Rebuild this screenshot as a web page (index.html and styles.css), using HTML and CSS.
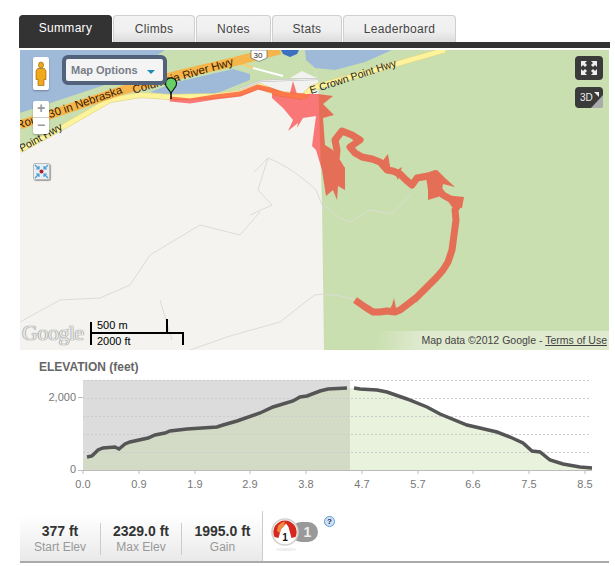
FILE: index.html
```html
<!DOCTYPE html>
<html lang="en">
<head>
  <meta charset="UTF-8">
  <title>Ride Summary</title>
  <link rel="stylesheet" href="styles.css">
</head>
<body>
  <div class="tabs">
    <div class="tab tab-active">Summary</div>
    <div class="tab tab-climbs">Climbs</div>
    <div class="tab tab-notes">Notes</div>
    <div class="tab tab-stats">Stats</div>
    <div class="tab tab-leader">Leaderboard</div>
  </div>
  <div class="tab-bar"></div>

  <div class="map">
    <svg class="map-art" viewBox="20 50 589 300" width="589" height="300">
      <rect x="20" y="50" width="589" height="300" fill="#f4f3f0"/>
      <!-- park -->
      <path d="M324 350L322 205L318 78L305 50H609V350Z" fill="#c9dfaf"/>
      <path d="M20 50H305L318 78L262 80L240 90L210 96L170 96L140 95L110 100L63 127L20 150Z" fill="#c9dfaf"/>
      <!-- water -->
      <path d="M20 50H165L120 80L20 113Z" fill="#9fb9d9"/>
      <path d="M150 92L177 82L233 69L250 74V80L225 90L213 95L170 95Z" fill="#9fb9d9"/>
      <path d="M305 50H392L365 62L335 70L315 68L306 60Z" fill="#9fb9d9"/>
      <path d="M240 91L262 81L318 79V88L302 96L270 90Z" fill="#f2f2f0"/>
      <path d="M290 78L302 71L317 78Z" fill="#f2f2f0"/>
      <!-- trails -->
      <g fill="none" stroke="#dcdcd6" stroke-width="1">
        <path d="M254 172L268 158L258 190L272 205L250 215"/>
        <path d="M268 158C285 165 300 175 316 190L324 210"/>
        <path d="M20 322L60 300L100 298L130 285L150 255L200 225L240 235L260 212"/>
        <path d="M160 300L172 340"/>
        <path d="M190 350L230 336L280 322L308 300L315 295L324 294"/>
        <path d="M324 205L340 218L350 222L370 210L392 214L410 195"/>
        <path d="M324 294L340 296L354 299"/>
      </g>
      <path d="M240 89L260 81L318 79" fill="none" stroke="#bbb" stroke-width="2"/>
      <path d="M240 89L260 81L318 79" fill="none" stroke="#eee" stroke-width="1"/>
      <!-- roads -->
      <path d="M20 150L63 127L110 100L140 95L170 97L215 96L240 93L260 86L277 93L303 97M303 97L312 88L445 50" fill="none" stroke="#e0d88c" stroke-width="6"/>
      <path d="M20 150L63 127L110 100L140 95L170 97L215 96L240 93L260 86L277 93L303 97M303 97L312 88L445 50" fill="none" stroke="#fdf39b" stroke-width="4.500"/>
      <path d="M240 63L253 68" fill="none" stroke="#f5d070" stroke-width="2"/>
      <path d="M253 68L283 76" fill="none" stroke="#fff" stroke-width="2"/>
      <path d="M20 125L123 90L177 75L233 62L280 50" fill="none" stroke="#f6b54a" stroke-width="9"/>
      <g class="road-label">
        <text transform="translate(123 93) rotate(-19)" text-anchor="end">Route 30 in Nebraska</text>
        <text transform="translate(234 65) rotate(-16)" text-anchor="end">Columbia River Hwy</text>
        <text transform="translate(311 94) rotate(-18)" class="road-small">E Crown Point Hwy</text>
        <text transform="translate(63 129) rotate(-29)" class="road-small" text-anchor="end">Point Hwy</text>
      </g>
      <path d="M251 50H267V58L259 61.500L251 58Z" fill="#fff" stroke="#555" stroke-width=".6"/>
      <text x="253.500" y="58" class="shield">30</text>
      <path d="M281 50H299L297 54L290 57L283 54Z" fill="#3d70c0"/>

      <!-- track -->
      <g class="track">
        <path d="M170 99L190 101L215 97L240 94L258 87L270 90L285 95L305 96" fill="none" stroke="#f00" stroke-width="5"/>
        <path d="M272 90L290 93L293 81L297 94L308 94L318 94L333 96L323 104L334 115L323 118L325 145L333 150L338 160L345 168L345 190L338 186L337 200L333 190L326 196L322 170L316 150L312 146L316 116L303 118L297 128L298 123L288 131L293 120L283 108L272 98Z" fill="#f00"/>
        <path d="M342 170L336 160L337 150L335 140L342 131L352 135L360 140L350 147L355 153L362 157L372 159L380 162L387 170L393 171L400 174L406 180L412 185L417 178L428 176L437 173M437 187L443 195L452 200L458 205L455 210L456 220L454 235L452 250L448 262L443 270L437 277L428 286L417 297L408 304L400 310L395 312L387 311L380 312L373 312L365 307L355 300" fill="none" stroke="#f00" stroke-width="7" stroke-linejoin="round"/>
        <path d="M426 177L437 170L445 178L455 187L443 184L441 196L428 200L428 190Z" fill="#f00"/>
        <path d="M380 164L388 154L391 172Z" fill="#f00"/>
        <path d="M394 172L402 167L398 180Z" fill="#f00"/>
        <path d="M444 195L464 197L462 208L452 207Z" fill="#f00"/>
        <path d="M392 305L394 298L397 313L388 312Z" fill="#f00"/>
        <path d="M415 296L420 290L417 303Z" fill="#f00"/>
        <path d="M352 138L364 139L356 146Z" fill="#f00"/>
      </g>
      <!-- start pin -->
      <path d="M171 99V91" stroke="#111" stroke-width="1.600"/>
      <path d="M171 93L166 86A5.600 5.600 0 1 1 176 86Z" fill="#66cf66" stroke="#111" stroke-width="1.200"/>
    </svg>

    <div class="pegman">
      <svg viewBox="0 0 16 33" width="16" height="33">
        <ellipse cx="8" cy="8" rx="2.500" ry="3" fill="#f1a91c" stroke="#8a5a00" stroke-width=".6"/>
        <path d="M4.500 11.500H11.500L13 14V22.500H11V28.500H5V22.500H3V14Z" fill="#f1a91c" stroke="#8a5a00" stroke-width=".6"/>
      </svg>
    </div>
    <div class="map-options">Map Options <span class="caret"></span></div>
    <div class="zoom-ctl">
      <div class="zoom-btn">+</div>
      <div class="zoom-btn">&minus;</div>
    </div>
    <div class="collapse-btn">
      <svg viewBox="0 0 17 17" width="17" height="17">
        <circle cx="8.500" cy="8.500" r="2" fill="#a8222c"/>
        <path d="M2 2L6 6M6 3V6H3M15 2L11 6M11 3V6H14M2 15L6 11M6 14V11H3M15 15L11 11M11 14V11H14" stroke="#4a9bd4" stroke-width="1.200" fill="none"/>
      </svg>
    </div>
    <div class="fullscreen-btn">
      <svg viewBox="0 0 28 24" width="28" height="24">
        <path d="M6 5H12L10 7L12 9L10 11L8 9L6 11ZM22 5H16L18 7L16 9L18 11L20 9L22 11ZM6 19H12L10 17L12 15L10 13L8 15L6 13ZM22 19H16L18 17L16 15L18 13L20 15L22 13Z" fill="#eee"/>
      </svg>
    </div>
    <div class="threed-btn">
      <span>3D</span>
      <svg class="threed-corner" viewBox="0 0 28 21" width="28" height="21">
        <path d="M28 8V19A2 2 0 0 1 26 21H16Z" fill="#aaa"/>
        <path d="M19 5H24V10Z" fill="#eee"/>
      </svg>
    </div>

    <div class="google-logo">Google</div>
    <div class="scale">
      <span class="scale-top">500 m</span>
      <span class="scale-bottom">2000 ft</span>
    </div>
    <div class="attribution">Map data &copy;2012 Google - <u>Terms of Use</u></div>
  </div>

  <h2 class="elev-title">ELEVATION (feet)</h2>
  <svg class="chart" viewBox="0 0 615 130" width="615" height="130">
    <g transform="translate(0 -370)">
      <rect x="83" y="380" width="267" height="90" fill="#dcdcdc"/>
      <path d="M83 459L87 457L92 456L98 450L103 448L115 447L119 449L125 444L130 442L148 438L155 435L165 433L170 431L187 429L217 427L223 425L237 421L260 413L273 407L293 401L300 397L307 396L320 391L328 389L345 389L350 388V470H83Z" fill="#d3dbc6"/>
      <path d="M350 388L360 389L377 390L387 392L407 399L427 407L440 414L467 425L497 432L510 437L523 443L532 451L540 452L550 460L563 464L580 467L592 468V470H350Z" fill="#e9f2dd"/>
      <g stroke="#ccc" stroke-width="1" stroke-dasharray="2 2" fill="none">
        <path d="M83 380.500H590"/>
        <path d="M83 398.500H590"/>
        <path d="M83 416.500H590"/>
        <path d="M83 434.500H590"/>
        <path d="M83 452.500H590"/>
      </g>
      <path d="M78 470.500H592M78 397.500H83M83 470V474M139 470V474M195 470V474M250 470V474M306 470V474M362 470V474M418 470V474M473 470V474M529 470V474M585 470V474" stroke="#bbb" stroke-width="1" fill="none"/>
      <path d="M87 457L92 456L98 450L103 448L115 447L119 449L125 444L130 442L148 438L155 435L165 433L170 431L187 429L217 427L223 425L237 421L260 413L273 407L293 401L300 397L307 396L320 391L328 389L347 388" fill="none" stroke="#555" stroke-width="3.500"/>
      <path d="M354 388L360 389L377 390L387 392L407 399L427 407L440 414L467 425L497 432L510 437L523 443L532 451L540 452L550 460L563 464L580 467L592 468" fill="none" stroke="#555" stroke-width="3.500"/>
      <g class="axis-label">
        <text x="76" y="401" text-anchor="end">2,000</text>
        <text x="76" y="473" text-anchor="end">0</text>
        <text x="83" y="488" text-anchor="middle">0.0</text>
        <text x="139" y="488" text-anchor="middle">0.9</text>
        <text x="195" y="488" text-anchor="middle">1.9</text>
        <text x="250" y="488" text-anchor="middle">2.9</text>
        <text x="306" y="488" text-anchor="middle">3.8</text>
        <text x="362" y="488" text-anchor="middle">4.7</text>
        <text x="418" y="488" text-anchor="middle">5.7</text>
        <text x="473" y="488" text-anchor="middle">6.6</text>
        <text x="529" y="488" text-anchor="middle">7.5</text>
        <text x="585" y="488" text-anchor="middle">8.5</text>
      </g>
    </g>
  </svg>

  <div class="stats-row">
    <div class="stats">
      <div class="stat"><b>377 ft</b><span>Start Elev</span></div>
      <div class="stat"><b>2329.0 ft</b><span>Max Elev</span></div>
      <div class="stat"><b>1995.0 ft</b><span>Gain</span></div>
    </div>
    <div class="badges">
      <div class="badge-shadow"></div>
      <div class="badge-count">1</div>
      <svg class="badge-icon" viewBox="0 0 28 28" width="28" height="28">
        <circle cx="14" cy="14" r="13" fill="#fff" stroke="#d4d0cc" stroke-width="1.600"/>
        <path d="M3.500 19A11.500 11.500 0 0 1 14 2.500A11.500 11.500 0 0 1 24.500 19L20.500 20L17.500 9L15 5.500L13 8L10 11L7.500 20Z" fill="#d5281f"/>
        <path d="M7 8Q10 4 14 3.500L13 8L10 11L8.500 15L6 13Z" fill="#f08a3c"/>
        <text x="14" y="23" class="badge-num">1</text>
      </svg>
      <div class="help">?</div>
    </div>
  </div>
</body>
</html>
```

FILE: styles.css
```css
body {
  font-family: "Liberation Sans", Arial, sans-serif;
  background-color: #ffffff;
  margin: 0;
  padding: 0;
  width: 615px;
  height: 566px;
  overflow: hidden;
}

.tabs {
  display: flex;
  gap: 1px;
  padding: 15px 0 0 19px;
  height: 27px;
}

.tab {
  box-sizing: border-box;
  height: 27px;
  line-height: 27px;
  text-align: center;
  font-size: 12px;
  letter-spacing: 0.3px;
  color: #444;
  background: linear-gradient(#f2f2f2, #f0f0f0 55%, #dcdcdc);
  border: 1px solid #cfcfcf;
  border-bottom: none;
  border-radius: 4px 4px 0 0;
}

.tab-active {
  width: 93px;
  color: #ffffff;
  background: #333333;
  border-color: #333333;
  line-height: 24px;
}

.tab-climbs { width: 82px; }
.tab-notes { width: 75px; }
.tab-stats { width: 70px; }
.tab-leader { width: 113px; }

.tab-bar {
  margin-left: 19px;
  width: 591px;
  height: 6px;
  background-color: #333333;
}

.map {
  position: relative;
  width: 589px;
  height: 300px;
  margin: 2px 0 0 20px;
  overflow: hidden;
}

.map-art {
  display: block;
}

.track {
  opacity: 0.5;
}

.road-label text {
  font-size: 11.5px;
  fill: #3a2000;
}

.road-label .road-small {
  font-size: 10.5px;
  fill: #222;
}

.shield {
  font-size: 8px;
  fill: #222;
}

.pegman {
  position: absolute;
  left: 13px;
  top: 7px;
  width: 16px;
  height: 33px;
  background-color: #fff;
  border-radius: 2px;
  box-shadow: 0 1px 2px rgba(0, 0, 0, 0.3);
}

.map-options {
  position: absolute;
  left: 42px;
  top: 5px;
  box-sizing: border-box;
  width: 105px;
  height: 30px;
  line-height: 22px;
  padding-left: 5px;
  font-size: 11px;
  font-weight: bold;
  color: #777d88;
  background-color: #f4f4f4;
  border: 4px solid #52627a;
  border-radius: 6px;
}

.caret {
  display: inline-block;
  margin-left: 6px;
  vertical-align: 0;
  border-top: 4px solid #1c8bb5;
  border-left: 4px solid transparent;
  border-right: 4px solid transparent;
}

.zoom-ctl {
  position: absolute;
  left: 13px;
  top: 51px;
  width: 16px;
  background-color: #fff;
  border-radius: 2px;
  box-shadow: 0 1px 2px rgba(0, 0, 0, 0.3);
}

.zoom-btn {
  height: 16px;
  line-height: 15px;
  text-align: center;
  font-size: 14px;
  font-weight: bold;
  color: #999;
  border-bottom: 1px solid #ccc;
}

.zoom-btn:last-child {
  border-bottom: none;
}

.collapse-btn {
  position: absolute;
  left: 13px;
  top: 113px;
  width: 17px;
  height: 17px;
  background-color: #e8eef2;
  border: 1px solid #bbb;
  border-radius: 2px;
  box-sizing: border-box;
  box-shadow: 1px 1px 1px rgba(0, 0, 0, 0.35);
}

.collapse-btn svg {
  display: block;
  margin: -1px;
}

.fullscreen-btn {
  position: absolute;
  left: 555px;
  top: 6px;
  width: 28px;
  height: 24px;
  background-color: #3a3a3a;
  border-radius: 4px;
}

.fullscreen-btn svg,
.threed-corner {
  display: block;
}

.threed-btn {
  position: absolute;
  left: 555px;
  top: 37px;
  width: 28px;
  height: 21px;
  background-color: #3a3a3a;
  border-radius: 4px;
  color: #eee;
  font-size: 10px;
  line-height: 21px;
}

.threed-btn span {
  position: absolute;
  left: 5px;
  top: 0;
}

.google-logo {
  position: absolute;
  left: 2px;
  top: 270px;
  font-family: "Liberation Serif", serif;
  font-size: 22px;
  letter-spacing: -0.5px;
  color: #e8e8e8;
  text-shadow: 0 0 1px #777, 0 0 1px #777;
}

.scale {
  position: absolute;
  left: 70px;
  top: 272px;
  width: 92px;
  height: 23px;
  border-left: 2px solid #000;
  font-size: 11px;
  color: #000;
}

.scale::before {
  content: "";
  position: absolute;
  left: 0;
  right: 0;
  top: 10px;
  height: 2px;
  background-color: #000;
}

.scale::after {
  content: "";
  position: absolute;
  right: 0;
  top: 11px;
  width: 16px;
  height: 12px;
  border-right: 2px solid #000;
  box-sizing: border-box;
}

.scale-top {
  position: absolute;
  left: 5px;
  top: -3px;
  padding-right: 38px;
  height: 13px;
  border-right: 2px solid #000;
}

.scale-bottom {
  position: absolute;
  left: 5px;
  top: 13px;
  line-height: 12px;
}

.attribution {
  position: absolute;
  right: 0;
  bottom: 0;
  height: 19px;
  line-height: 19px;
  padding: 0 2px 0 46px;
  font-size: 10.5px;
  color: #444;
  background: linear-gradient(to right, rgba(220, 232, 205, 0), #dfeacf 46px);
}

.elev-title {
  margin: 10px 0 0 39px;
  font-size: 12px;
  line-height: 14px;
  font-weight: bold;
  color: #666;
}

.chart {
  display: block;
  margin-top: -4px;
}

.axis-label text {
  font-size: 11px;
  fill: #777;
}

.stats-row {
  display: flex;
  box-sizing: border-box;
  width: 589px;
  height: 52px;
  margin: 11px 0 0 20px;
  border-bottom: 2px solid #aaa;
}

.stats {
  display: flex;
  align-items: center;
  box-sizing: border-box;
  width: 243px;
  height: 50px;
  border-right: 1px solid #ccc;
  background: linear-gradient(#fff 10%, #e9e9e9);
}

.stat {
  box-sizing: border-box;
  flex: 0 0 auto;
  display: flex;
  flex-direction: column;
  align-items: center;
  width: 81px;
  height: 32px;
  border-right: 1px solid #ccc;
  margin-top: 5px;
}

.stat:last-child {
  border-right: none;
}

.stat b {
  font-size: 14px;
  line-height: 16px;
  color: #333;
}

.stat span {
  font-size: 12px;
  line-height: 16px;
  color: #999;
}

.badges {
  position: relative;
  flex: 1;
}

.badge-icon {
  position: absolute;
  left: 8px;
  top: 7px;
}

.badge-num {
  font-size: 10px;
  font-weight: bold;
  text-anchor: middle;
  fill: #111;
}

.badge-count {
  position: absolute;
  left: 28px;
  top: 11px;
  width: 27px;
  height: 20px;
  line-height: 20px;
  padding-left: 6px;
  box-sizing: border-box;
  text-align: center;
  font-size: 14px;
  font-weight: bold;
  color: #eee;
  background-color: #999;
  border-radius: 10px;
}

.badge-shadow {
  position: absolute;
  left: 12px;
  top: 37px;
  width: 22px;
  height: 3px;
  background-color: #eee;
  border-radius: 50%;
}

.help {
  position: absolute;
  left: 61px;
  top: 5px;
  box-sizing: border-box;
  width: 11px;
  height: 11px;
  line-height: 9px;
  text-align: center;
  font-size: 8px;
  font-weight: bold;
  color: #225;
  background-color: #cfe3f7;
  border: 1px solid #5a9bd8;
  border-radius: 50%;
}
```
